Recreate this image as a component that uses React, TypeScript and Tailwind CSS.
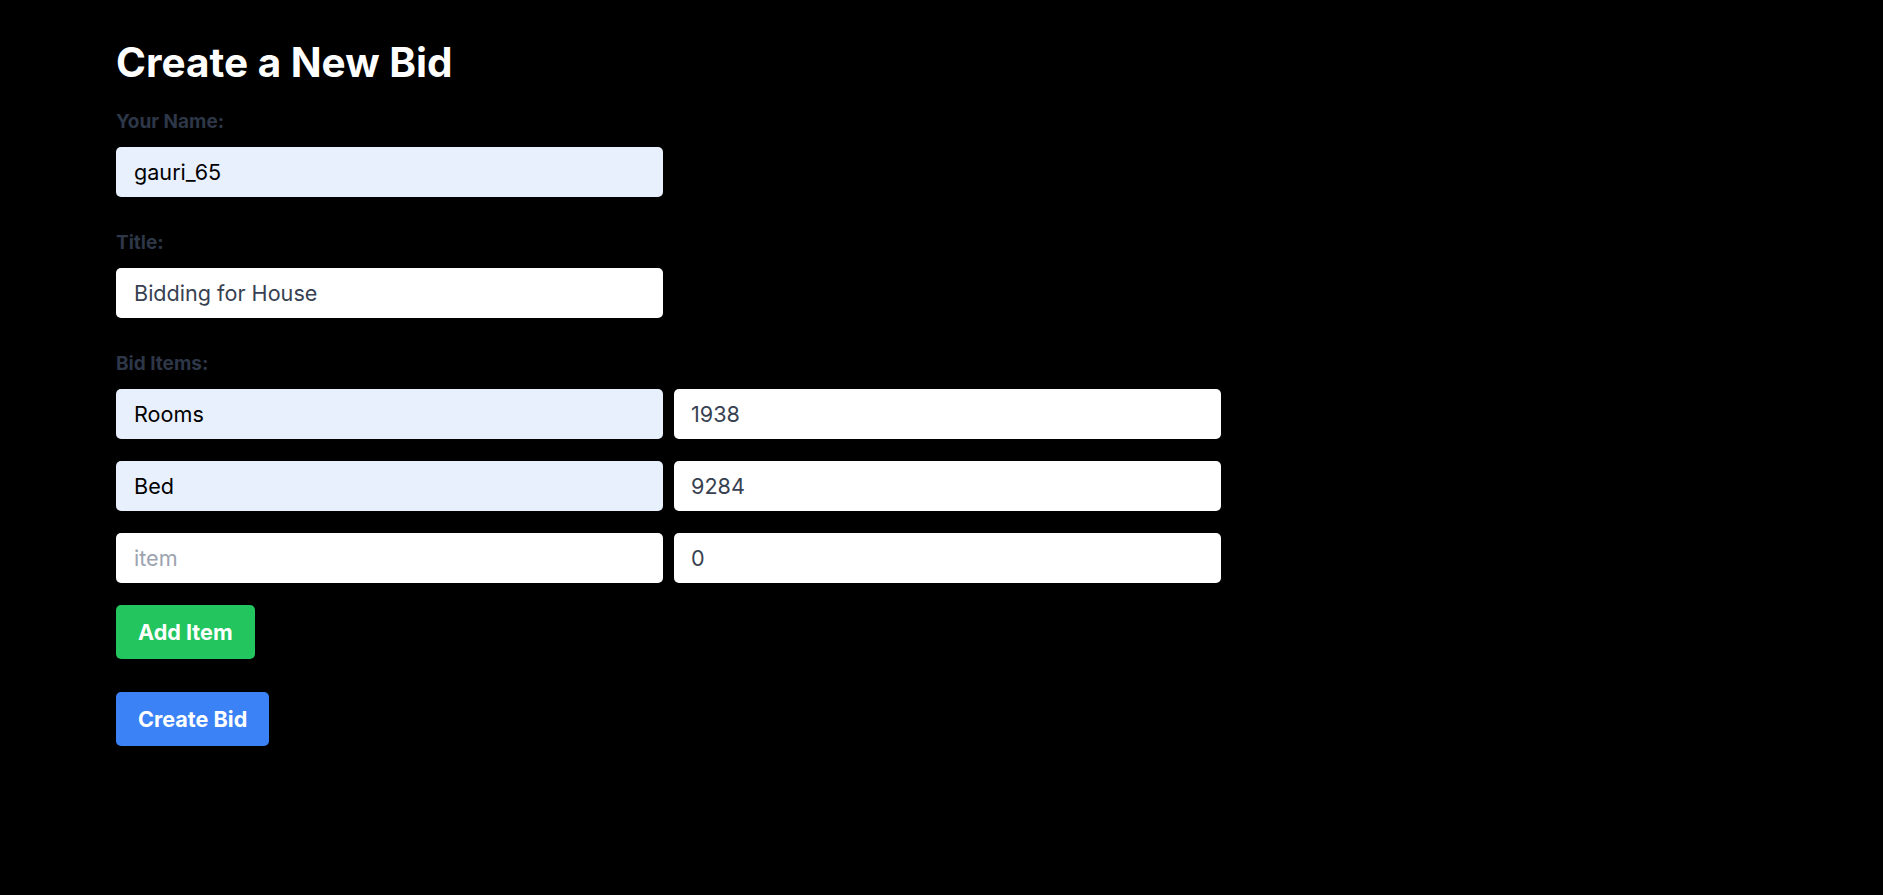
import React, { useState } from "react";

interface BidItem {
    name: string;
    price: string;
}

const font = { fontFamily: "Inter, 'Noto Sans', sans-serif" };

const App: React.FC = () => {
    const [name, setName] = useState("gauri_65");
    const [title, setTitle] = useState("Bidding for House");
    const [items, setItems] = useState<BidItem[]>([
        { name: "Rooms", price: "1938" },
        { name: "Bed", price: "9284" },
        { name: "", price: "0" },
    ]);

    const updateItem = (i: number, key: keyof BidItem, value: string) => {
        const next = [...items];
        next[i] = { ...next[i], [key]: value };
        setItems(next);
    };

    const addItem = () => setItems([...items, { name: "", price: "0" }]);

    return (
        <div className="min-h-screen w-full bg-black" style={font}>
            <div className="pl-[116px] pt-[39px]">
                <h1 className="text-[40.5px] leading-[48px] font-bold text-white">
                    Create a New Bid
                </h1>

                <form className="flex flex-col" onSubmit={(e) => e.preventDefault()}>
                    <label className="mt-[23px] text-[19px] leading-[24px] font-bold text-[#2d3748]">
                        Your Name:
                    </label>
                    <input
                        value={name}
                        onChange={(e) => setName(e.target.value)}
                        className="mt-[13px] h-[50px] w-[547px] rounded-[5px] bg-[#e8f0fe] px-[18px] text-[21.6px] text-black outline-none"
                    />

                    <label className="mt-[34px] text-[19px] leading-[24px] font-bold text-[#2d3748]">
                        Title:
                    </label>
                    <input
                        value={title}
                        onChange={(e) => setTitle(e.target.value)}
                        className="mt-[13px] h-[50px] w-[547px] rounded-[5px] bg-white px-[18px] text-[21.6px] text-[#374151] outline-none"
                    />

                    <label className="mt-[34px] text-[19px] leading-[24px] font-bold text-[#2d3748]">
                        Bid Items:
                    </label>
                    <div className="mt-[13px] flex flex-col gap-[22px]">
                        {items.map((item, i) => (
                            <div key={i} className="flex gap-[11px]">
                                <input
                                    value={item.name}
                                    placeholder="item"
                                    onChange={(e) => updateItem(i, "name", e.target.value)}
                                    className={`h-[50px] w-[547px] rounded-[5px] px-[18px] text-[21.6px] outline-none placeholder:text-[#9ca3af] ${item.name ? "bg-[#e8f0fe] text-black" : "bg-white text-[#374151]"}`}
                                />
                                <input
                                    value={item.price}
                                    onChange={(e) => updateItem(i, "price", e.target.value)}
                                    className="h-[50px] w-[547px] rounded-[5px] bg-white px-[17px] text-[21.6px] text-[#374151] outline-none"
                                />
                            </div>
                        ))}
                    </div>

                    <div className="mt-[22px]">
                        <button
                            type="button"
                            onClick={addItem}
                            className="h-[54px] rounded-[5px] bg-[#22c55e] px-[22px] text-[21.6px] font-bold text-white"
                        >
                            Add Item
                        </button>
                    </div>
                    <div className="mt-[33px]">
                        <button
                            type="submit"
                            className="h-[54px] rounded-[5px] bg-[#3b82f6] px-[22px] text-[21.6px] font-bold text-white"
                        >
                            Create Bid
                        </button>
                    </div>
                </form>
            </div>
        </div>
    );
};

export default App;
